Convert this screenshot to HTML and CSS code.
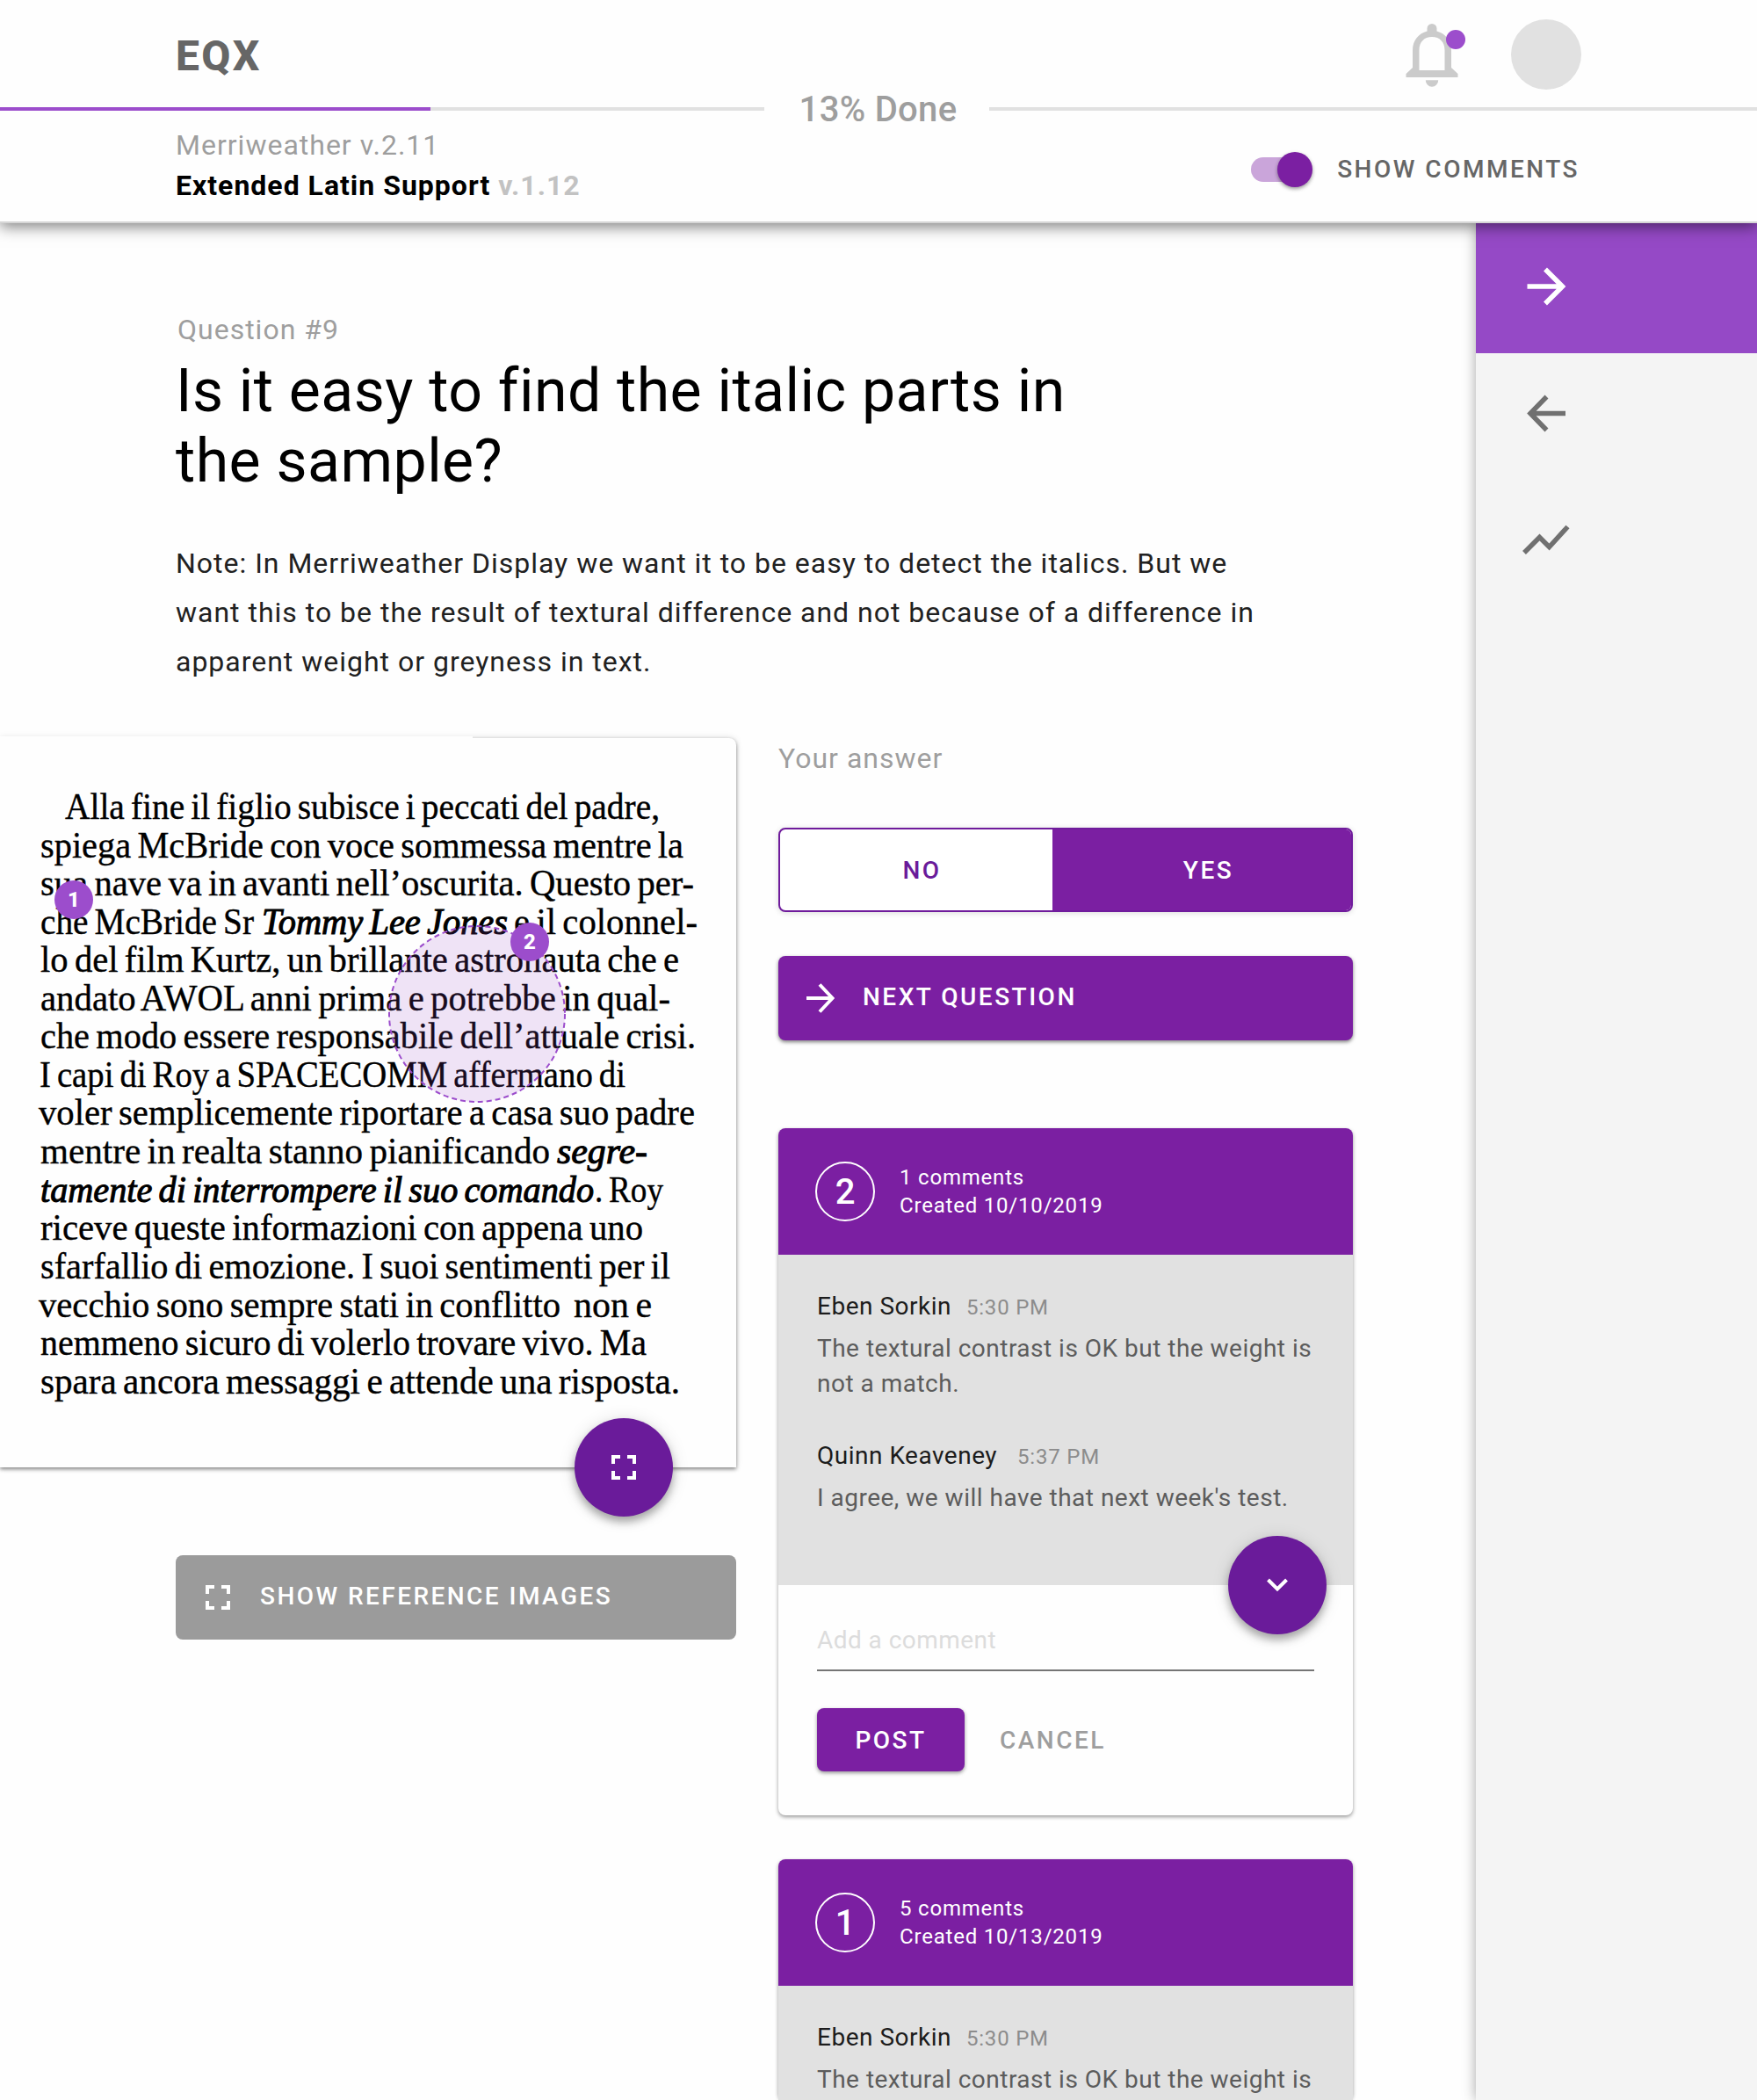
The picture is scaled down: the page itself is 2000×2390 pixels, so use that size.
FILE: index.html
```html
<!DOCTYPE html>
<html lang="en">
<head>
<meta charset="utf-8">
<title>EQX</title>
<link rel="stylesheet" href="styles.css">
</head>
<body>
<header class="header">
  <div class="topbar">
    <div class="logo">EQX</div>
    <div class="account">
      <div class="bell">
        <svg width="60" height="72" viewBox="0 0 60 72"><path fill="#cbcbcb" fill-rule="evenodd" d="M30 0a5.500 5.500 0 0 1 5.500 5.500V8.500C45 11 52 19 52 30V50L59.500 57V61H.5V57L8 50V30C8 19 15 11 24.500 8.500V5.500A5.500 5.500 0 0 1 30 0ZM30 15C21 15 15.500 21 15.500 30V53H44.500V30C44.500 21 39 15 30 15ZM22.800 64.300H37.200A7.200 7.500 0 0 1 22.800 64.300Z"/></svg>
        <span class="bell-dot"></span>
      </div>
      <div class="avatar"></div>
    </div>
  </div>
  <div class="progress">
    <div class="progress-left"><div class="progress-fill"></div></div>
    <div class="progress-label">13% Done</div>
    <div class="progress-right"></div>
  </div>
  <div class="subbar">
    <div class="versions">
      <div class="family">Merriweather v.2.11</div>
      <div class="project">Extended Latin Support <span class="project-version">v.1.12</span></div>
    </div>
    <div class="switch-row">
      <div class="switch"><span class="thumb"></span></div>
      <div class="switch-label">SHOW COMMENTS</div>
    </div>
  </div>
</header>
<div class="page">
  <main class="main">
    <div class="eyebrow">Question #9</div>
    <h1 class="title">Is it easy to find the italic parts in<br>the sample?</h1>
    <p class="note">Note: In Merriweather Display we want it to be easy to detect the italics. But we<br>want this to be the result of textural difference and not because of a difference in<br>apparent weight or greyness in text.</p>
    <div class="columns">
      <section class="left">
        <div class="sample">
          <svg class="specimen" width="838" height="830" viewBox="0 840 838 830">
            <text x="74" y="932" textLength="677" lengthAdjust="spacingAndGlyphs">Alla fine il figlio subisce i peccati del padre,</text>
            <text x="46" y="975.500" textLength="732" lengthAdjust="spacingAndGlyphs">spiega McBride con voce sommessa mentre la</text>
            <text x="46" y="1019" textLength="744" lengthAdjust="spacingAndGlyphs">sua nave va in avanti nell’oscurita. Questo per-</text>
            <text x="46" y="1062.500" textLength="243" lengthAdjust="spacingAndGlyphs">che McBride Sr</text>
            <text class="bi" x="298" y="1062.500" textLength="280" lengthAdjust="spacingAndGlyphs">Tommy Lee Jones</text>
            <text x="585" y="1062.500" textLength="209" lengthAdjust="spacingAndGlyphs">e il colonnel-</text>
            <text x="46" y="1106" textLength="727" lengthAdjust="spacingAndGlyphs">lo del film Kurtz, un brillante astronauta che e</text>
            <text x="46" y="1149.700" textLength="717" lengthAdjust="spacingAndGlyphs">andato AWOL anni prima e potrebbe in qual-</text>
            <text x="46" y="1193.300" textLength="746" lengthAdjust="spacingAndGlyphs">che modo essere responsabile dell’attuale crisi.</text>
            <text x="45" y="1236.800" textLength="667" lengthAdjust="spacingAndGlyphs">I capi di Roy a SPACECOMM affermano di</text>
            <text x="44" y="1280.400" textLength="747" lengthAdjust="spacingAndGlyphs">voler semplicemente riportare a casa suo padre</text>
            <text x="46" y="1324" textLength="580" lengthAdjust="spacingAndGlyphs">mentre in realta stanno pianificando</text>
            <text class="bi" x="634" y="1324" textLength="103" lengthAdjust="spacingAndGlyphs">segre-</text>
            <text class="bi" x="46" y="1367.700" textLength="630" lengthAdjust="spacingAndGlyphs">tamente di interrompere il suo comando</text>
            <text x="677" y="1367.700" textLength="78" lengthAdjust="spacingAndGlyphs">. Roy</text>
            <text x="46" y="1411.300" textLength="686" lengthAdjust="spacingAndGlyphs">riceve queste informazioni con appena uno</text>
            <text x="46" y="1454.900" textLength="717" lengthAdjust="spacingAndGlyphs">sfarfallio di emozione. I suoi sentimenti per il</text>
            <text x="44" y="1498.500" textLength="594" lengthAdjust="spacingAndGlyphs">vecchio sono sempre stati in conflitto</text>
            <text x="653" y="1498.500" textLength="89" lengthAdjust="spacingAndGlyphs">non e</text>
            <text x="46" y="1542.100" textLength="690" lengthAdjust="spacingAndGlyphs">nemmeno sicuro di volerlo trovare vivo. Ma</text>
            <text x="46" y="1585.800" textLength="728" lengthAdjust="spacingAndGlyphs">spara ancora messaggi e attende una risposta.</text>
            <circle class="area" cx="543" cy="1154" r="100"/>
          </svg>
          <span class="pin pin-1">1</span>
          <span class="pin pin-2">2</span>
          <div class="fab sample-fab">
            <svg width="28" height="28" viewBox="0 0 28 28"><path class="line4" d="M2 10V2H10M18 2H26V10M26 18V26H18M10 26H2V18"/></svg>
          </div>
        </div>
        <div class="ref-button">
          <svg width="28" height="28" viewBox="0 0 28 28"><path class="line4" d="M2 10V2H10M18 2H26V10M26 18V26H18M10 26H2V18"/></svg>
          <span>SHOW REFERENCE IMAGES</span>
        </div>
      </section>
      <section class="right">
        <div class="answer-label">Your answer</div>
        <div class="choice">
          <div class="choice-no">NO</div>
          <div class="choice-yes">YES</div>
        </div>
        <div class="next">
          <svg width="32" height="36" viewBox="0 0 32 36"><path class="line4" d="M0 18H29M15 2.500L29.500 18L15 33.500"/></svg>
          <span>NEXT QUESTION</span>
        </div>
        <article class="thread">
          <div class="thread-head">
            <div class="number">2</div>
            <div class="meta">1 comments<br>Created 10/10/2019</div>
          </div>
          <div class="comments">
            <div class="comment">
              <div class="who"><span class="name">Eben Sorkin</span><span class="time">5:30 PM</span></div>
              <div class="body">The textural contrast is OK but the weight is<br>not a match.</div>
            </div>
            <div class="comment">
              <div class="who"><span class="name name-wide">Quinn Keaveney</span><span class="time">5:37 PM</span></div>
              <div class="body">I agree, we will have that next week's test.</div>
            </div>
            <div class="fab thread-fab">
              <svg width="26" height="18" viewBox="0 0 26 18"><path class="line4" d="M2.500 3L13 13.500L23.500 3"/></svg>
            </div>
          </div>
          <div class="compose">
            <div class="field">Add a comment</div>
            <div class="actions">
              <div class="post">POST</div>
              <div class="cancel">CANCEL</div>
            </div>
          </div>
        </article>
        <article class="thread">
          <div class="thread-head">
            <div class="number">1</div>
            <div class="meta">5 comments<br>Created 10/13/2019</div>
          </div>
          <div class="comments comments-cut">
            <div class="comment">
              <div class="who"><span class="name">Eben Sorkin</span><span class="time">5:30 PM</span></div>
              <div class="body">The textural contrast is OK but the weight is</div>
            </div>
          </div>
        </article>
      </section>
    </div>
  </main>
  <nav class="rail">
    <div class="rail-item rail-active">
      <svg width="56" height="56" viewBox="0 0 56 56"><path d="M6.500 28H46M27 8.500L46.500 28L27 47.500"/></svg>
    </div>
    <div class="rail-item">
      <svg width="56" height="56" viewBox="0 0 56 56"><path d="M50 28.500H11M28.500 9.500L10 28.500L28.500 47.500"/></svg>
    </div>
    <div class="rail-item">
      <svg width="56" height="56" viewBox="0 0 56 56"><path d="M3 43L20.500 25.500L31.500 36.500L52.500 13.500"/></svg>
    </div>
  </nav>
</div>
</body>
</html>
```

FILE: styles.css
```css
* { box-sizing: border-box; }
body {
  margin: 0;
  height: 2390px;
  overflow: hidden;
  background: #fefefe;
  font-family: Roboto, "Liberation Sans", sans-serif;
  color: #000;
}
svg { display: block; flex: none; }

.header {
  position: relative;
  z-index: 2;
  height: 254px;
  background: #fefefe;
  border-bottom: 2px solid #d6d6d6;
  box-shadow: 0 4px 16px rgba(0, 0, 0, .5);
}
.topbar {
  display: flex;
  justify-content: space-between;
  height: 104px;
  padding: 22px 200px 0;
}
.logo {
  padding-top: 14px;
  font-size: 48px;
  font-weight: 800;
  line-height: 56px;
  letter-spacing: 2.300px;
  color: #666;
}
.account { display: flex; gap: 60px; }
.bell { position: relative; width: 60px; padding-top: 5px; }
.bell-dot {
  position: absolute;
  left: 46px;
  top: 12px;
  width: 22px;
  height: 22px;
  border-radius: 50%;
  background: #9c4dcc;
}
.avatar { width: 80px; height: 80px; border-radius: 50%; background: #e1e1e1; }

.progress { display: flex; align-items: center; height: 40px; }
.progress-left { width: 870px; height: 4px; background: #e1e1e1; }
.progress-fill { width: 490px; height: 4px; background: #9c4dcc; }
.progress-label {
  width: 256px;
  padding: 2px 0 0 3px;
  text-align: center;
  font-size: 40px;
  font-weight: 500;
  line-height: 40px;
  letter-spacing: .3px;
  color: #9e9e9e;
}
.progress-right { flex: 1; height: 4px; background: #e1e1e1; }

.subbar {
  display: flex;
  justify-content: space-between;
  height: 98px;
  padding: 0 202px 0 200px;
}
.versions { margin-top: -2px; font-size: 32px; line-height: 46px; letter-spacing: 1px; white-space: nowrap; }
.family { color: #9e9e9e; }
.project { font-weight: 700; letter-spacing: 1px; }
.project-version { color: #c2c2c2; }
.switch-row { display: flex; align-items: center; gap: 28px; height: 98px; }
.switch {
  display: flex;
  align-items: center;
  justify-content: flex-end;
  width: 70px;
  height: 28px;
  border-radius: 14px;
  background: linear-gradient(90deg, #caa5da 50px, transparent 50px);
}
.thumb {
  flex: none;
  width: 40px;
  height: 40px;
  border-radius: 50%;
  background: #7b1fa2;
  box-shadow: 0 2px 4px rgba(0, 0, 0, .4);
}
.switch-label { margin-top: -2px; font-size: 28px; font-weight: 500; letter-spacing: 2.500px; color: #666; }

.page { display: flex; height: 2136px; }
.main { width: 1680px; padding-top: 102px; }
.eyebrow { padding-left: 202px; font-size: 32px; line-height: 38px; letter-spacing: 1px; color: #9e9e9e; }
.title {
  margin: 11px 0 0;
  padding-left: 200px;
  font-size: 68px;
  font-weight: 400;
  line-height: 80px;
  letter-spacing: .45px;
  white-space: nowrap;
}
.note {
  margin: 48px 0 0;
  padding-left: 200px;
  font-size: 32px;
  line-height: 56px;
  letter-spacing: .99px;
  color: #212121;
  white-space: nowrap;
}
.columns { display: flex; gap: 48px; margin-top: 59px; }
.left { width: 838px; }
.right { width: 654px; }

.sample {
  position: relative;
  height: 830px;
  border-radius: 0 8px 0 0;
  background: #fefefe;
  box-shadow: 0 2px 4px rgba(0, 0, 0, .45), 0 0 8px rgba(0, 0, 0, .12);
}
.sample::before {
  content: "";
  position: absolute;
  left: 0;
  top: -2px;
  width: 538px;
  height: 4px;
  background: #fefefe;
}
.specimen text {
  font-family: "Liberation Serif", serif;
  font-size: 43px;
  word-spacing: -3px;
  fill: #000;
  stroke: #000;
  stroke-width: .4px;
}
.specimen .bi { font-style: italic; stroke-width: 1.100px; }
.specimen .area { fill: rgba(156, 77, 204, .15); stroke: #9c4dcc; stroke-width: 2; stroke-dasharray: 6 4; }
.pin {
  position: absolute;
  width: 44px;
  height: 44px;
  border-radius: 50%;
  background: #9c4dcc;
  color: #fff;
  font-size: 24px;
  font-weight: 800;
  line-height: 44px;
  text-align: center;
}
.pin-1 { left: 62px; top: 162px; }
.pin-2 { left: 581px; top: 210px; }
.line4 { fill: none; stroke: #fff; stroke-width: 4; }
.fab {
  position: absolute;
  display: flex;
  align-items: center;
  justify-content: center;
  width: 112px;
  height: 112px;
  border-radius: 50%;
  background: #6a1b9a;
  box-shadow: 0 6px 10px rgba(0, 0, 0, .3), 0 2px 20px rgba(0, 0, 0, .12);
}
.sample-fab { left: 654px; bottom: -56px; }
.ref-button {
  display: flex;
  align-items: center;
  gap: 34px;
  width: 638px;
  height: 96px;
  margin: 100px 0 0 200px;
  padding-left: 34px;
  border-radius: 8px;
  background: #9b9b9b;
  color: #fff;
  font-size: 28px;
  font-weight: 500;
  letter-spacing: 2.450px;
  white-space: nowrap;
}
.ref-button span, .next span { margin-top: -4px; }

.answer-label { padding-top: 4px; font-size: 32px; line-height: 38px; letter-spacing: 1px; color: #9e9e9e; }
.choice {
  display: flex;
  height: 96px;
  margin-top: 60px;
  border: 2px solid #6f1b9c;
  border-radius: 8px;
  background: #fff;
  font-size: 28px;
  font-weight: 500;
  line-height: 93px;
  letter-spacing: 2.500px;
  text-align: center;
  box-shadow: 0 1px 6px rgba(0, 0, 0, .15);
  overflow: hidden;
}
.choice-no { width: 310px; padding-left: 13px; color: #6a1b9a; }
.choice-yes { flex: 1; padding-left: 15px; background: #7b1fa2; color: #fff; }
.next {
  display: flex;
  align-items: center;
  gap: 32px;
  height: 96px;
  margin-top: 50px;
  padding-left: 32px;
  border-radius: 8px;
  background: #7b1fa2;
  color: #fff;
  font-size: 28px;
  font-weight: 500;
  letter-spacing: 2.500px;
  box-shadow: 0 2px 4px rgba(0, 0, 0, .5);
}

.thread {
  margin-top: 50px;
  border-radius: 8px;
  background: #fefefe;
  box-shadow: 0 2px 4px rgba(0, 0, 0, .4);
}
.next + .thread { margin-top: 100px; }
.thread-head {
  display: flex;
  align-items: center;
  gap: 28px;
  height: 144px;
  padding-left: 42px;
  border-radius: 8px 8px 0 0;
  background: #7b1fa2;
  color: #fff;
}
.number {
  width: 68px;
  height: 68px;
  border: 2px solid #fff;
  border-radius: 50%;
  font-size: 40px;
  font-weight: 500;
  line-height: 66px;
  text-align: center;
}
.meta { padding-bottom: 1px; font-size: 24px; line-height: 32px; letter-spacing: .8px; }
.comments { position: relative; height: 376px; padding: 39px 44px 0; background: #e1e1e1; }
.comments-cut { height: 130px; }
.comment { margin-bottom: 42px; white-space: nowrap; }
.who { display: flex; align-items: baseline; height: 40px; line-height: 40px; margin-bottom: 8px; }
.name { margin-right: 17px; font-size: 28px; letter-spacing: .5px; color: #1c1c1c; }
.name-wide { margin-right: 23px; }
.time { font-size: 24px; letter-spacing: .8px; color: #8c8c8c; }
.body { font-size: 28px; line-height: 40px; letter-spacing: .49px; color: #5c5c5c; }
.thread-fab { left: 512px; bottom: -56px; }
.compose { height: 262px; padding: 42px 44px 0; }
.field {
  height: 56px;
  border-bottom: 2px solid #757575;
  font-size: 28px;
  line-height: 41px;
  letter-spacing: .45px;
  color: #dcdcdc;
}
.actions {
  display: flex;
  gap: 40px;
  margin-top: 42px;
  height: 72px;
  font-size: 28px;
  font-weight: 500;
  line-height: 73px;
  letter-spacing: 2.500px;
}
.post {
  width: 168px;
  border-radius: 8px;
  background: #7b1fa2;
  color: #fff;
  text-align: center;
  box-shadow: 0 2px 4px rgba(0, 0, 0, .4);
}
.cancel { color: #9e9e9e; }

.rail { width: 320px; background: #f4f4f4; box-shadow: 0 0 14px rgba(0, 0, 0, .35); }
.rail-item { height: 144px; padding: 40px 0 0 52px; }
.rail-item path { fill: none; stroke: #707070; stroke-width: 5.500; }
.rail-active { height: 148px; padding-top: 44px; background: #9549c6; }
.rail-active path { stroke: #fff; }
```
